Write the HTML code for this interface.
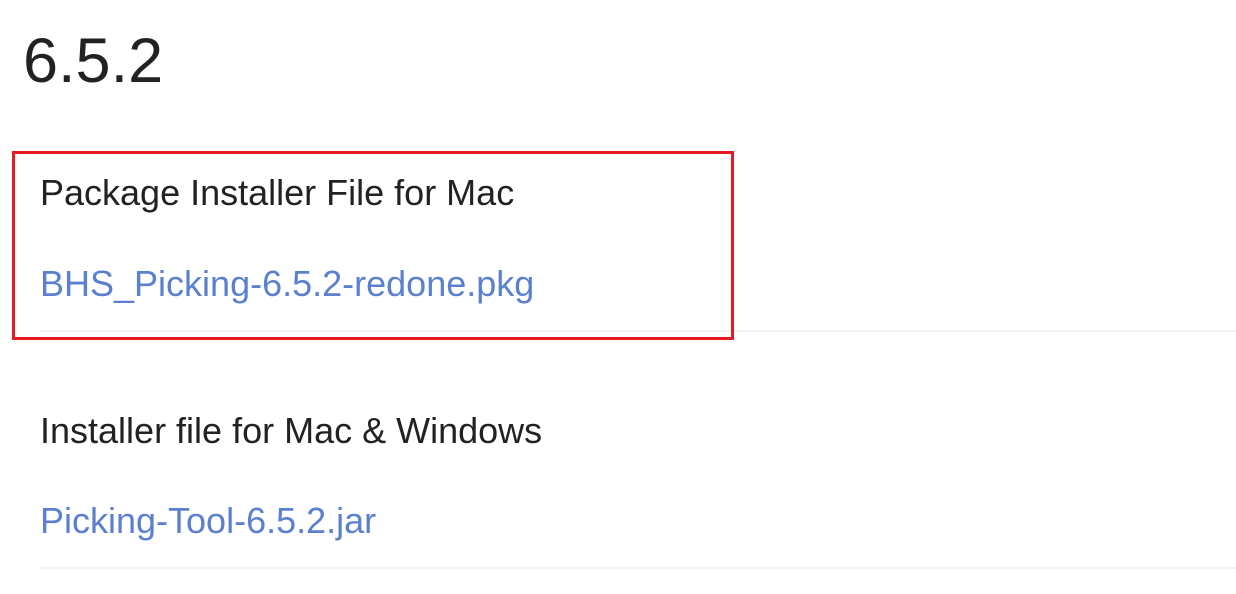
<!DOCTYPE html>
<html><head><meta charset="utf-8"><style>
body{margin:0;background:#fff;width:1236px;height:594px;overflow:hidden;font-family:"Liberation Sans",sans-serif;position:relative}
.t{position:absolute;white-space:nowrap;line-height:1}
h1{position:absolute;margin:0;left:23px;top:30px;font-size:63px;font-weight:400;color:#222;line-height:1}
.d{color:#222;font-size:36px}
.l{color:#5b80cf;font-size:36px}
.box{position:absolute;left:12px;top:151px;width:716px;height:183px;border:3px solid #e41b23}
.sep{position:absolute;left:40px;right:0;height:2px;background:#f3f3f3}
</style></head><body>
<h1>6.5.2</h1>
<div class="sep" style="top:330px"></div>
<div class="sep" style="top:567px"></div>
<div class="box"></div>
<div class="t d" style="left:40px;top:175px">Package Installer File for Mac</div>
<div class="t l" style="left:40px;top:266px">BHS_Picking-6.5.2-redone.pkg</div>
<div class="t d" style="left:40px;top:413px">Installer file for Mac &amp; Windows</div>
<div class="t l" style="left:40px;top:503px">Picking-Tool-6.5.2.jar</div>
</body></html>
